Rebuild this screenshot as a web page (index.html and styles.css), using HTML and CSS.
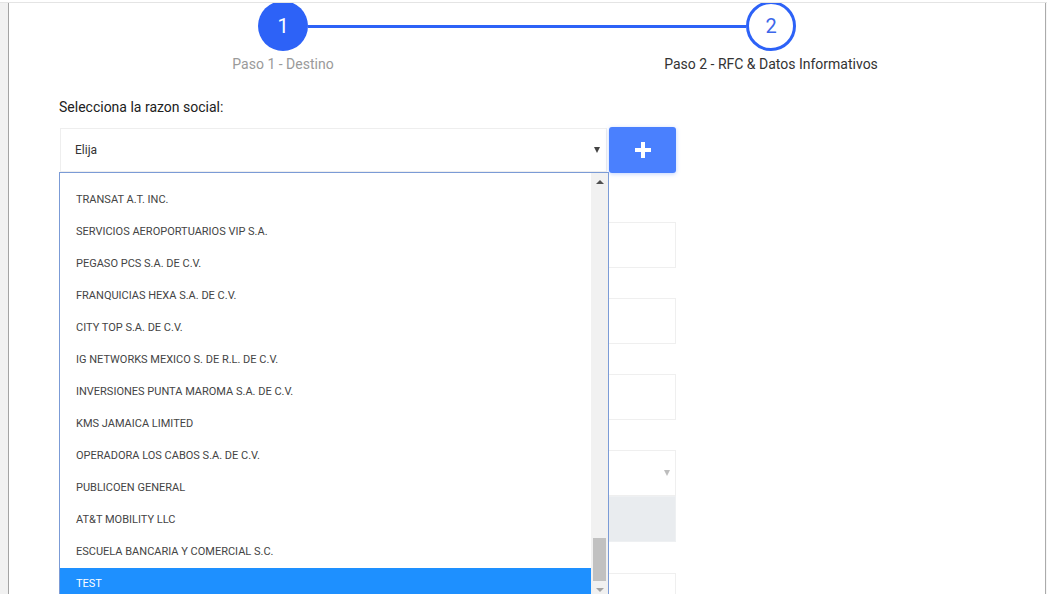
FILE: index.html
```html
<!DOCTYPE html>
<html lang="es">
<head>
<meta charset="utf-8">
<title>Paso 2 - RFC &amp; Datos Informativos</title>
<link rel="stylesheet" href="styles.css">
</head>
<body>
<div class="frame">
  <div class="gutter"></div>
  <main class="panel">
    <div class="stepper">
      <div class="step step-done">
        <div class="circle">1</div>
        <div class="step-label">Paso 1 - Destino</div>
      </div>
      <div class="step step-current">
        <div class="circle">2</div>
        <div class="step-label">Paso 2 - RFC &amp; Datos Informativos</div>
      </div>
    </div>

    <form class="form">
      <label class="field-label">Selecciona la razon social:</label>
      <div class="select-row">
        <div class="select">
          <span class="select-value">Elija</span>
          <span class="caret"></span>
        </div>
        <button type="button" class="add-btn" aria-label="Agregar">
          <svg width="18" height="18" viewBox="0 0 18 18"><path d="M9 1v16M1 9h16" stroke="#fff" stroke-width="4"/></svg>
        </button>

        <div class="dropdown">
          <div class="options">
            <ul class="option-list">
              <li>TRANSAT A.T. INC.</li>
              <li>SERVICIOS AEROPORTUARIOS VIP S.A.</li>
              <li>PEGASO PCS S.A. DE C.V.</li>
              <li>FRANQUICIAS HEXA S.A. DE C.V.</li>
              <li>CITY TOP S.A. DE C.V.</li>
              <li>IG NETWORKS MEXICO S. DE R.L. DE C.V.</li>
              <li>INVERSIONES PUNTA MAROMA S.A. DE C.V.</li>
              <li>KMS JAMAICA LIMITED</li>
              <li>OPERADORA LOS CABOS S.A. DE C.V.</li>
              <li>PUBLICOEN GENERAL</li>
              <li>AT&amp;T MOBILITY LLC</li>
              <li>ESCUELA BANCARIA Y COMERCIAL S.C.</li>
              <li class="selected">TEST</li>
            </ul>
          </div>
          <div class="scrollbar">
            <span class="sb-btn sb-up"></span>
            <div class="sb-track"><span class="sb-thumb"></span></div>
            <span class="sb-btn sb-down"></span>
          </div>
        </div>
      </div>

      <div class="group first">
        <div class="label-space"></div>
        <div class="input"></div>
      </div>
      <div class="group">
        <div class="label-space"></div>
        <div class="input"></div>
      </div>
      <div class="group">
        <div class="label-space"></div>
        <div class="input"></div>
      </div>
      <div class="group">
        <div class="label-space"></div>
        <div class="input input-select"><span class="caret caret-light"></span></div>
        <div class="input input-disabled"></div>
      </div>
      <div class="group wide">
        <div class="label-space"></div>
        <div class="input"></div>
      </div>
    </form>
  </main>
  <div class="gutter-r"></div>
</div>
</body>
</html>
```
FILE: styles.css
```css
* { box-sizing: border-box; }

html, body {
  margin: 0;
  height: 100%;
}

body {
  background: #ffffff;
  font-family: Roboto, "Noto Sans", Arial, sans-serif;
  overflow: hidden;
}

.frame {
  margin-top: 2px;
  border-top: 1px solid #e4e4e4;
  display: flex;
  height: 592px;
}

.gutter {
  width: 8px;
  background: #f1f1f1;
}

.gutter-r {
  flex: 1;
  background: #f7f7f7;
}

.panel {
  width: 1038px;
  border-left: 1px solid #a3a3a3;
  border-right: 1px solid #ababab;
  background: #fff;
  overflow: hidden;
}

/* ---------- stepper ---------- */
.stepper {
  display: flex;
  justify-content: center;
  margin-top: -2px;
}

.step {
  width: 488px;
  display: flex;
  flex-direction: column;
  align-items: center;
  position: relative;
}

.step-done::after {
  content: "";
  position: absolute;
  left: calc(50% + 25px);
  top: 24px;
  width: 438px;
  height: 3px;
  background: #2d62f7;
}

.circle {
  width: 50px;
  height: 50px;
  border-radius: 50%;
  display: flex;
  align-items: center;
  justify-content: center;
  font-size: 20px;
  line-height: 1;
}

.step-done .circle {
  background: #2d62f7;
  color: #fff;
}

.step-current .circle {
  background: #fff;
  border: 3px solid #2d62f7;
  color: #3d67ea;
}

.step-label {
  margin-top: 3px;
  font-size: 14px;
  line-height: 20px;
  white-space: nowrap;
}

.step-done .step-label { color: #9a9a9a; }
.step-current .step-label { color: #333; }

/* ---------- form ---------- */
.form {
  margin: 23px 0 0 51px;
  width: 616px;
}

.field-label {
  display: block;
  font-size: 14px;
  line-height: 20px;
  color: #212121;
  margin-left: -1px;
}

.select-row {
  position: relative;
  margin-top: 10px;
  display: flex;
  align-items: center;
  gap: 2px;
  height: 46px;
}

.select {
  width: 548px;
  height: 44px;
  border: 1px solid #eeeeee;
  display: flex;
  align-items: center;
  justify-content: space-between;
  padding: 0 6px 0 14px;
  font-size: 12px;
  color: #333;
}

.caret {
  width: 0;
  height: 0;
  border-left: 3.5px solid transparent;
  border-right: 3.5px solid transparent;
  border-top: 6px solid #444;
}

.caret-light { border-top-color: #bdbdbd; }

.add-btn {
  width: 67px;
  height: 46px;
  border: none;
  border-radius: 3px;
  background: #4a80fe;
  box-shadow: 0 1px 4px rgba(74, 128, 254, 0.35);
  display: flex;
  align-items: center;
  justify-content: center;
  padding: 0;
}

/* ---------- open dropdown ---------- */
.dropdown {
  position: absolute;
  z-index: 5;
  left: -1px;
  top: 45px;
  width: 550px;
  height: 427px;
  border: 1px solid #7b9bd6;
  background: #fff;
  display: flex;
}

.options {
  flex: 1;
  overflow: hidden;
}

.option-list {
  list-style: none;
  margin: 0;
  padding: 11px 0 0 0;
}

.option-list li {
  height: 32px;
  line-height: 32px;
  padding-left: 16px;
  font-size: 11px;
  color: #444;
  white-space: nowrap;
}

.option-list li.selected {
  background: #1e90ff;
  color: #fff;
}

.scrollbar {
  width: 17px;
  background: #f1f1f1;
  display: flex;
  flex-direction: column;
}

.sb-btn {
  height: 17px;
  display: flex;
  align-items: center;
  justify-content: center;
}

.sb-up::before,
.sb-down::before {
  content: "";
  width: 0;
  height: 0;
  border-left: 4px solid transparent;
  border-right: 4px solid transparent;
}

.sb-up::before { border-bottom: 4px solid #505050; }
.sb-down::before { border-top: 4px solid #a3a3a3; }

.sb-track {
  flex: 1;
  display: flex;
  flex-direction: column;
  justify-content: flex-end;
  align-items: center;
}

.sb-thumb {
  width: 13px;
  height: 43px;
  background: #c1c1c1;
}

/* ---------- fields behind dropdown ---------- */
.group.first { margin-top: 19px; }
.group.wide { margin-top: 1px; }

.label-space {
  height: 20px;
  margin-bottom: 10px;
}

.input {
  height: 46px;
  border: 1px solid #efefef;
  background: #fff;
}

.input-select {
  display: flex;
  align-items: center;
  justify-content: flex-end;
  padding-right: 5px;
}

.input-disabled {
  background: #e9ecef;
  border-color: #eef0f2;
}
```
